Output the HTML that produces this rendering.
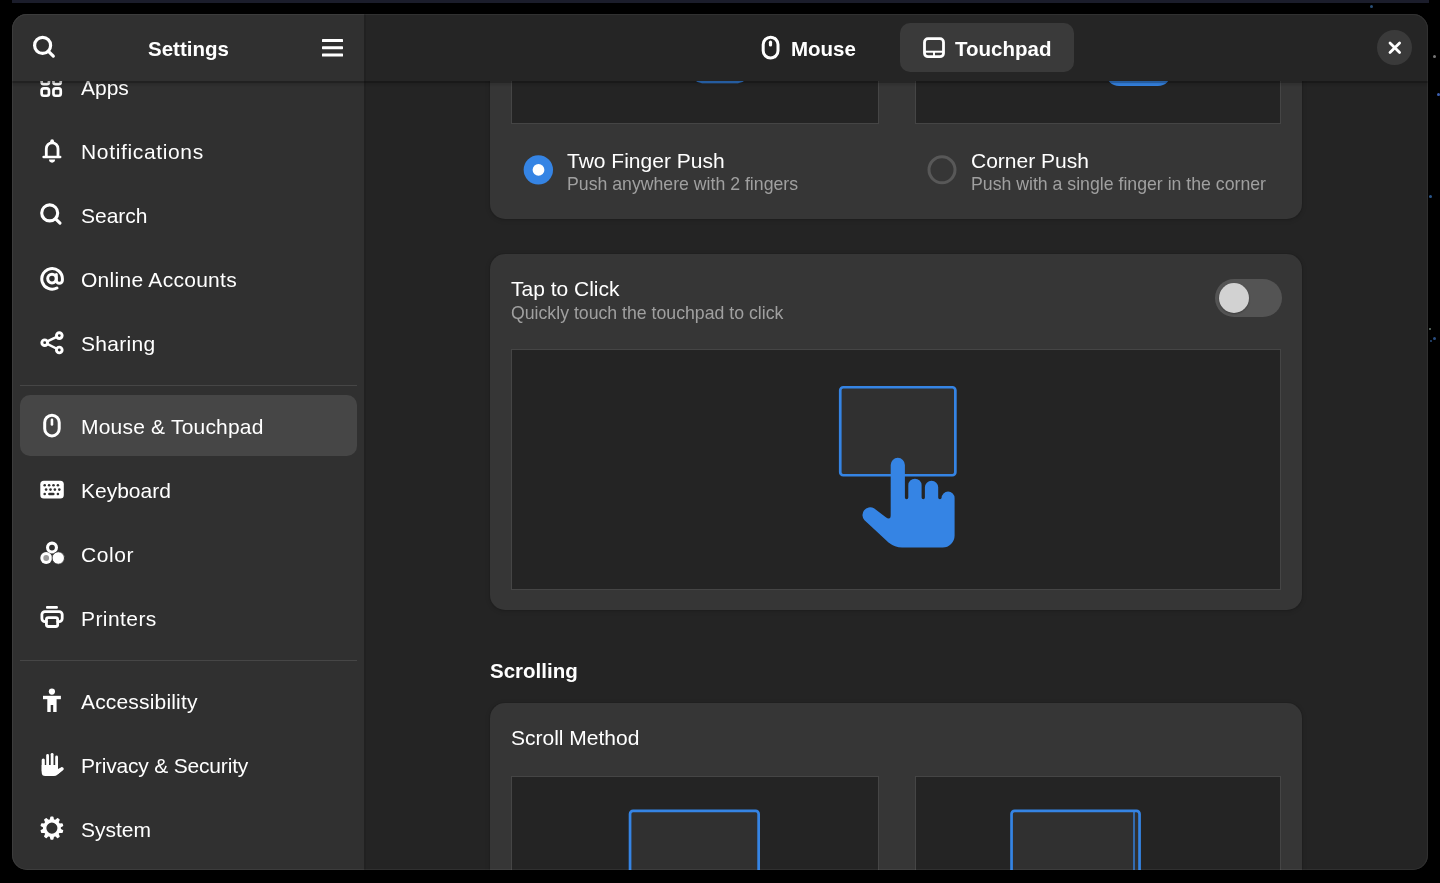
<!DOCTYPE html>
<html><head><meta charset="utf-8">
<style>
html,body{margin:0;padding:0;width:1440px;height:883px;overflow:hidden;background:#000;}
body{position:relative;font-family:"Liberation Sans",sans-serif;color:#fff;}
.a{position:absolute;}
#topstrip{left:12px;top:0;width:1417px;height:3px;background:#1b1d2b;}
#win{position:absolute;left:12px;top:14px;width:1416px;height:856px;border-radius:15px;overflow:hidden;background:#242424;}
#winborder{position:absolute;left:12px;top:14px;width:1416px;height:856px;border-radius:15px;box-shadow:inset 0 0 0 1px rgba(255,255,255,0.06);pointer-events:none;}
#pg{position:absolute;left:-12px;top:-14px;width:1440px;height:883px;}
.t{position:absolute;white-space:nowrap;will-change:transform;font-size:21px;line-height:21px;color:#fff;}
.b{font-weight:700;font-size:20.5px;line-height:20px;}
.sub{font-size:17.7px;line-height:18px;color:#a0a0a0;}
.card{position:absolute;background:#363636;border-radius:15px;box-shadow:0 0 0 1px rgba(0,0,0,0.05),0 1px 4px 1px rgba(0,0,0,0.12);}
.frame{position:absolute;background:#242424;box-shadow:inset 0 0 0 1px #454545;}
.sep{position:absolute;left:20px;width:337px;height:1px;background:#464646;}
svg{position:absolute;left:0;top:0;}
</style></head><body>
<div id="topstrip" class="a"></div>
<div class="a" style="left:1370px;top:5px;width:3px;height:3px;border-radius:50%;opacity:0.7;background:#3b6fa8;"></div>
<div class="a" style="left:1433px;top:55px;width:3px;height:3px;border-radius:50%;background:#777;"></div>
<div class="a" style="left:1437px;top:93px;width:3px;height:3px;border-radius:50%;background:#3c5fb0;"></div>
<div class="a" style="left:1429px;top:195px;width:3px;height:3px;border-radius:50%;opacity:0.7;background:#3b7bc8;"></div>
<div class="a" style="left:1429px;top:328px;width:2px;height:2px;border-radius:50%;background:#6a7a70;"></div>
<div class="a" style="left:1433px;top:337px;width:3px;height:3px;border-radius:50%;opacity:0.7;background:#3b6fb8;"></div>
<div class="a" style="left:1430px;top:340px;width:2px;height:2px;border-radius:50%;opacity:0.7;background:#3b6fb8;"></div>

<div id="win"><div id="pg">
  <!-- content area -->
  <div class="a" style="left:366px;top:0;width:1074px;height:883px;background:#242424;"></div>

  <!-- card 1 (Two finger / corner push) -->
  <div class="card" style="left:490px;top:-40px;width:812px;height:259px;"></div>
  <div class="frame" style="left:511px;top:-40px;width:368px;height:164px;"></div>
  <div class="frame" style="left:915px;top:-40px;width:366px;height:164px;"></div>
  <div class="t" style="left:567px;top:149.5px;">Two Finger Push</div>
  <div class="t sub" style="left:567px;top:175.3px;">Push anywhere with 2 fingers</div>
  <div class="t" style="left:971px;top:149.5px;">Corner Push</div>
  <div class="t sub" style="left:971px;top:175.3px;">Push with a single finger in the corner</div>

  <!-- card 2 (Tap to click) -->
  <div class="card" style="left:490px;top:254px;width:812px;height:356px;"></div>
  <div class="t" style="left:511px;top:278px;">Tap to Click</div>
  <div class="t sub" style="left:511px;top:303.7px;">Quickly touch the touchpad to click</div>
  <div class="frame" style="left:511px;top:349px;width:770px;height:241px;"></div>
  <!-- switch -->
  <div class="a" style="left:1215px;top:279px;width:67px;height:38px;border-radius:19px;background:#545454;"></div>
  <div class="a" style="left:1219px;top:283px;width:30px;height:30px;border-radius:15px;background:#d2d2d2;box-shadow:0 1px 2px rgba(0,0,0,0.3);"></div>


  <div class="t b" style="left:490px;top:661px;">Scrolling</div>

  <!-- card 3 (scroll method) -->
  <div class="card" style="left:490px;top:703px;width:812px;height:260px;"></div>
  <div class="t" style="left:511px;top:726.5px;">Scroll Method</div>
  <div class="frame" style="left:511px;top:776px;width:368px;height:200px;"></div>
  <div class="frame" style="left:915px;top:776px;width:366px;height:200px;"></div>

  <svg width="1440" height="883" viewBox="0 0 1440 883">
    <!-- top palms -->
    <rect x="692" y="30" width="56" height="53.2" rx="10" fill="#3584e4"/>
    <rect x="1106" y="30" width="65" height="56" rx="13" fill="#3584e4"/>
    <!-- radios -->
    <circle cx="538.35" cy="169.85" r="14.7" fill="#3584e4"/>
    <circle cx="538.5" cy="169.9" r="5.9" fill="#fff"/>
    <circle cx="942" cy="169.8" r="13" fill="none" stroke="#585858" stroke-width="3"/>
    <!-- touchpad -->
    <rect x="840.25" y="387.25" width="115.1" height="88" rx="3" fill="#303030" stroke="#3584e4" stroke-width="2.7"/>
    <path fill="#3584e4" d="M890.7 464.9 A7.1 7.1 0 0 1 904.9 464.9 V497.5 A1.7 1.7 0 0 0 908.3 497.5 V485.3 A6.65 6.65 0 0 1 921.6 485.3 V497.5 A1.65 1.65 0 0 0 924.9 497.5 V487.35 A6.65 6.65 0 0 1 938.2 487.35 V497.5 A1.7 1.7 0 0 0 941.6 497.5 V498.1 A6.5 6.5 0 0 1 954.6 498.1 V535.5 A12 12 0 0 1 942.6 547.5 H902 Q895 547.5 888.5 542.5 L864.5 520.2 A7.7 7.7 0 0 1 874 508.3 L885.5 517 Q890.7 521 890.7 515 Z"/>
    <!-- scroll method -->
    <rect x="630.05" y="810.95" width="128.6" height="120" rx="3" fill="#303030" stroke="#3584e4" stroke-width="2.7"/>
    <rect x="1011.55" y="810.95" width="128" height="120" rx="3" fill="#303030" stroke="#3584e4" stroke-width="2.7"/>
    <path d="M1134 812 V880" stroke="#3584e4" stroke-width="1.4"/>
  </svg>

  <!-- sidebar -->
  <div class="a" style="left:0;top:0;width:364px;height:883px;background:#303030;"></div>
  <div class="a" style="left:364px;top:0;width:2px;height:883px;background:#212121;"></div>
  <div class="sep" style="top:385px;"></div>
  <div class="sep" style="top:660px;"></div>
  <div class="a" style="left:20px;top:395px;width:337px;height:61px;border-radius:10px;background:#464646;"></div>

  <div class="t" style="left:81px;top:77px;">Apps</div>
  <div class="t" style="left:81px;top:141px;letter-spacing:0.65px;">Notifications</div>
  <div class="t" style="left:81px;top:205px;">Search</div>
  <div class="t" style="left:81px;top:269px;letter-spacing:0.28px;">Online Accounts</div>
  <div class="t" style="left:81px;top:333px;letter-spacing:0.3px;">Sharing</div>
  <div class="t" style="left:81px;top:416px;letter-spacing:0.2px;">Mouse &amp; Touchpad</div>
  <div class="t" style="left:81px;top:480px;">Keyboard</div>
  <div class="t" style="left:81px;top:544px;letter-spacing:0.6px;">Color</div>
  <div class="t" style="left:81px;top:608px;letter-spacing:0.43px;">Printers</div>
  <div class="t" style="left:81px;top:691px;letter-spacing:0.17px;">Accessibility</div>
  <div class="t" style="left:81px;top:755px;letter-spacing:-0.18px;">Privacy &amp; Security</div>
  <div class="t" style="left:81px;top:819px;">System</div>


  <svg width="1440" height="883" viewBox="0 0 1440 883" fill="none" stroke="#fff" stroke-linecap="round" stroke-linejoin="round">
    <!-- apps -->
    <g stroke-width="2.7"><rect x="41.65" y="76.85" width="7.3" height="7.3" rx="2.2"/><rect x="53.45" y="76.85" width="7.3" height="7.3" rx="2.2"/><rect x="41.65" y="88.45" width="7.3" height="7.3" rx="2.2"/><rect x="53.45" y="88.45" width="7.3" height="7.3" rx="2.2"/></g>
    <!-- bell -->
    <path d="M46.3 156.5 V148.7 A5.85 5.85 0 0 1 58 148.7 V156.5" stroke-width="2.8"/>
    <path d="M43.7 157 H60.1" stroke-width="2.7"/>
    <circle cx="52.15" cy="141.2" r="1.9" fill="#fff" stroke="none"/>
    <path d="M49 159.6 A3.05 3.05 0 0 0 55.1 159.6 Z" fill="#fff" stroke="none"/>
    <!-- search -->
    <circle cx="49.7" cy="212.9" r="8" stroke-width="3.1"/><path d="M55.6 218.8 L60 223.2" stroke-width="3.1"/>
    <!-- @ -->
    <circle cx="52" cy="278.6" r="4.3" stroke-width="3"/>
    <path d="M56.3 274.5 V280.3 A3.05 3.05 0 0 0 62.4 280.3 V278.8 A10.3 10.3 0 1 0 56.9 288" stroke-width="3"/>
    <!-- share -->
    <path d="M44.7 342.7 L59.3 335.6 M44.7 342.7 L59.3 350" stroke-width="2.5"/>
    <circle cx="59.3" cy="335.6" r="2.85" stroke-width="2.9" fill="#303030"/><circle cx="44.7" cy="342.7" r="2.85" stroke-width="2.9" fill="#303030"/><circle cx="59.3" cy="350" r="2.85" stroke-width="2.9" fill="#303030"/>
    <!-- mouse -->
    <rect x="44.7" y="415.2" width="14.5" height="20.7" rx="7.25" stroke-width="3"/>
    <path d="M51.95 419.9 V424.45" stroke-width="2.6"/>
    <!-- keyboard -->
    <rect x="40.3" y="480.8" width="23.5" height="17.7" rx="3.5" fill="#fff" stroke="none"/>
    <g fill="#303030" stroke="none">
      <circle cx="44.7" cy="485.3" r="1.3"/><circle cx="49.1" cy="485.3" r="1.3"/><circle cx="53.5" cy="485.3" r="1.3"/><circle cx="57.9" cy="485.3" r="1.3"/>
      <circle cx="46.1" cy="489.6" r="1.3"/><circle cx="50.5" cy="489.6" r="1.3"/><circle cx="54.9" cy="489.6" r="1.3"/><circle cx="59.3" cy="489.6" r="1.3"/>
      <circle cx="44.7" cy="494" r="1.3"/><rect x="48.1" y="492.7" width="6.5" height="2.6" rx="1.3"/><circle cx="57.9" cy="494" r="1.3"/>
    </g>
    <!-- color -->
    <circle cx="52" cy="547.6" r="4.45" stroke-width="3.1"/>
    <circle cx="46.2" cy="558" r="5.9" fill="#fff" stroke="none"/>
    <circle cx="46.2" cy="558" r="2.9" fill="#999" stroke="none"/>
    <circle cx="58.3" cy="558" r="6.2" fill="#fff" stroke="#303030" stroke-width="0.8"/>
    <!-- printer -->
    <rect x="46" y="606.1" width="11.9" height="2.7" rx="1" fill="#fff" stroke="none"/>
    <path d="M46.4 621.6 H44.9 A3 3 0 0 1 41.9 618.6 V614.6 A3 3 0 0 1 44.9 611.6 H59.2 A3 3 0 0 1 62.2 614.6 V618.6 A3 3 0 0 1 59.2 621.6 H57.7" stroke-width="2.8"/>
    <rect x="46.4" y="617.7" width="11.3" height="8.8" rx="2" stroke-width="2.8"/>
    <!-- accessibility -->
    <g fill="#fff" stroke="none">
      <circle cx="51.9" cy="691.6" r="3.1"/>
      <rect x="43" y="695.8" width="17.9" height="3.4"/>
      <path d="M47.3 699 H56.6 V712.1 H53.2 V705 H50.7 V712.1 H47.3 Z"/>
    </g>
    <!-- privacy hand -->
    <g fill="#fff" stroke="none">
      <rect x="41.7" y="758.4" width="3.1" height="14" rx="1.55"/>
      <rect x="46.2" y="754.1" width="2.8" height="14" rx="1.4"/>
      <rect x="50.7" y="752.9" width="2.8" height="14" rx="1.4"/>
      <rect x="55.2" y="755.6" width="2.8" height="14" rx="1.4"/>
      <path d="M41.7 765 H58 V769 L62 767 L63.5 769.5 L57 775 Q56 776.1 54 776.1 H45.2 A3.5 3.5 0 0 1 41.7 772.6 Z"/>
    </g>
    <path d="M57.5 772.5 L62.2 768.8" stroke-width="3"/>
    <!-- gear -->
    <path fill="#fff" stroke="#fff" stroke-width="1.5" stroke-linejoin="round" fill-rule="evenodd" d="M50.53 819.91 L51.04 817.23 L52.76 817.23 L53.27 819.91 L55.60 820.67 L57.60 818.81 L58.98 819.81 L57.82 822.28 L59.26 824.27 L61.97 823.93 L62.50 825.56 L60.11 826.87 L60.11 829.33 L62.50 830.64 L61.97 832.27 L59.26 831.93 L57.82 833.92 L58.98 836.39 L57.60 837.39 L55.60 835.53 L53.27 836.29 L52.76 838.97 L51.04 838.97 L50.53 836.29 L48.20 835.53 L46.20 837.39 L44.82 836.39 L45.98 833.92 L44.54 831.93 L41.83 832.27 L41.30 830.64 L43.69 829.33 L43.69 826.87 L41.30 825.56 L41.83 823.93 L44.54 824.27 L45.98 822.28 L44.82 819.81 L46.20 818.81 L48.20 820.67Z M58.2 828.1 A6.3 6.3 0 1 0 45.6 828.1 A6.3 6.3 0 1 0 58.2 828.1Z"/>
  </svg>

  <!-- headers -->
  <div class="a" style="left:0;top:0;width:364px;height:81px;background:#303030;"></div>
  <div class="a" style="left:364px;top:0;width:2px;height:81px;background:#212121;"></div>
  <div class="a" style="left:366px;top:0;width:1074px;height:81px;background:#252525;"></div>
  <div class="a" style="left:0;top:81px;width:1440px;height:2px;background:rgba(0,0,0,0.3);"></div>
  <div class="a" style="left:0;top:83px;width:1440px;height:4px;background:linear-gradient(rgba(0,0,0,0.12),rgba(0,0,0,0));"></div>

  <div class="t b" style="left:148px;top:38.6px;">Settings</div>
  <div class="a" style="left:900px;top:23px;width:174px;height:49px;border-radius:10px;background:#3a3a3a;"></div>
  <div class="t b" style="left:791px;top:38.8px;">Mouse</div>
  <div class="t b" style="left:955px;top:38.8px;">Touchpad</div>
  <div class="a" style="left:1377.3px;top:30.2px;width:34.8px;height:34.8px;border-radius:50%;background:#3a3a3a;"></div>


  <svg width="1440" height="883" viewBox="0 0 1440 883" fill="none" stroke="#fff" stroke-linecap="round" stroke-linejoin="round">
    <!-- header search -->
    <circle cx="42.6" cy="45.4" r="8" stroke-width="3.2"/><path d="M48.5 51.3 L53.3 56.1" stroke-width="3.2"/>
    <!-- hamburger -->
    <g fill="#fff" stroke="none"><rect x="322" y="39" width="21" height="3" rx="0.6"/><rect x="322" y="46.2" width="21" height="3" rx="0.6"/><rect x="322" y="53.5" width="21" height="3" rx="0.6"/></g>
    <!-- header mouse -->
    <rect x="763.2" y="37.2" width="14.8" height="20.9" rx="7.4" stroke-width="3"/>
    <path d="M770.5 42.2 V44.9" stroke-width="3.2"/>
    <!-- header touchpad -->
    <rect x="924.5" y="38.7" width="19" height="18" rx="3.5" stroke-width="2.8"/>
    <path d="M924.5 51.7 H943.5" stroke-width="2" stroke-linecap="butt"/>
    <path d="M934 51.7 V56.5" stroke-width="1.9" stroke-linecap="butt"/>
    <!-- close -->
    <path d="M1390 42.9 L1399.6 52.5 M1399.6 42.9 L1390 52.5" stroke-width="2.8"/>
  </svg>

</div></div>
<div id="winborder"></div>
</body></html>
